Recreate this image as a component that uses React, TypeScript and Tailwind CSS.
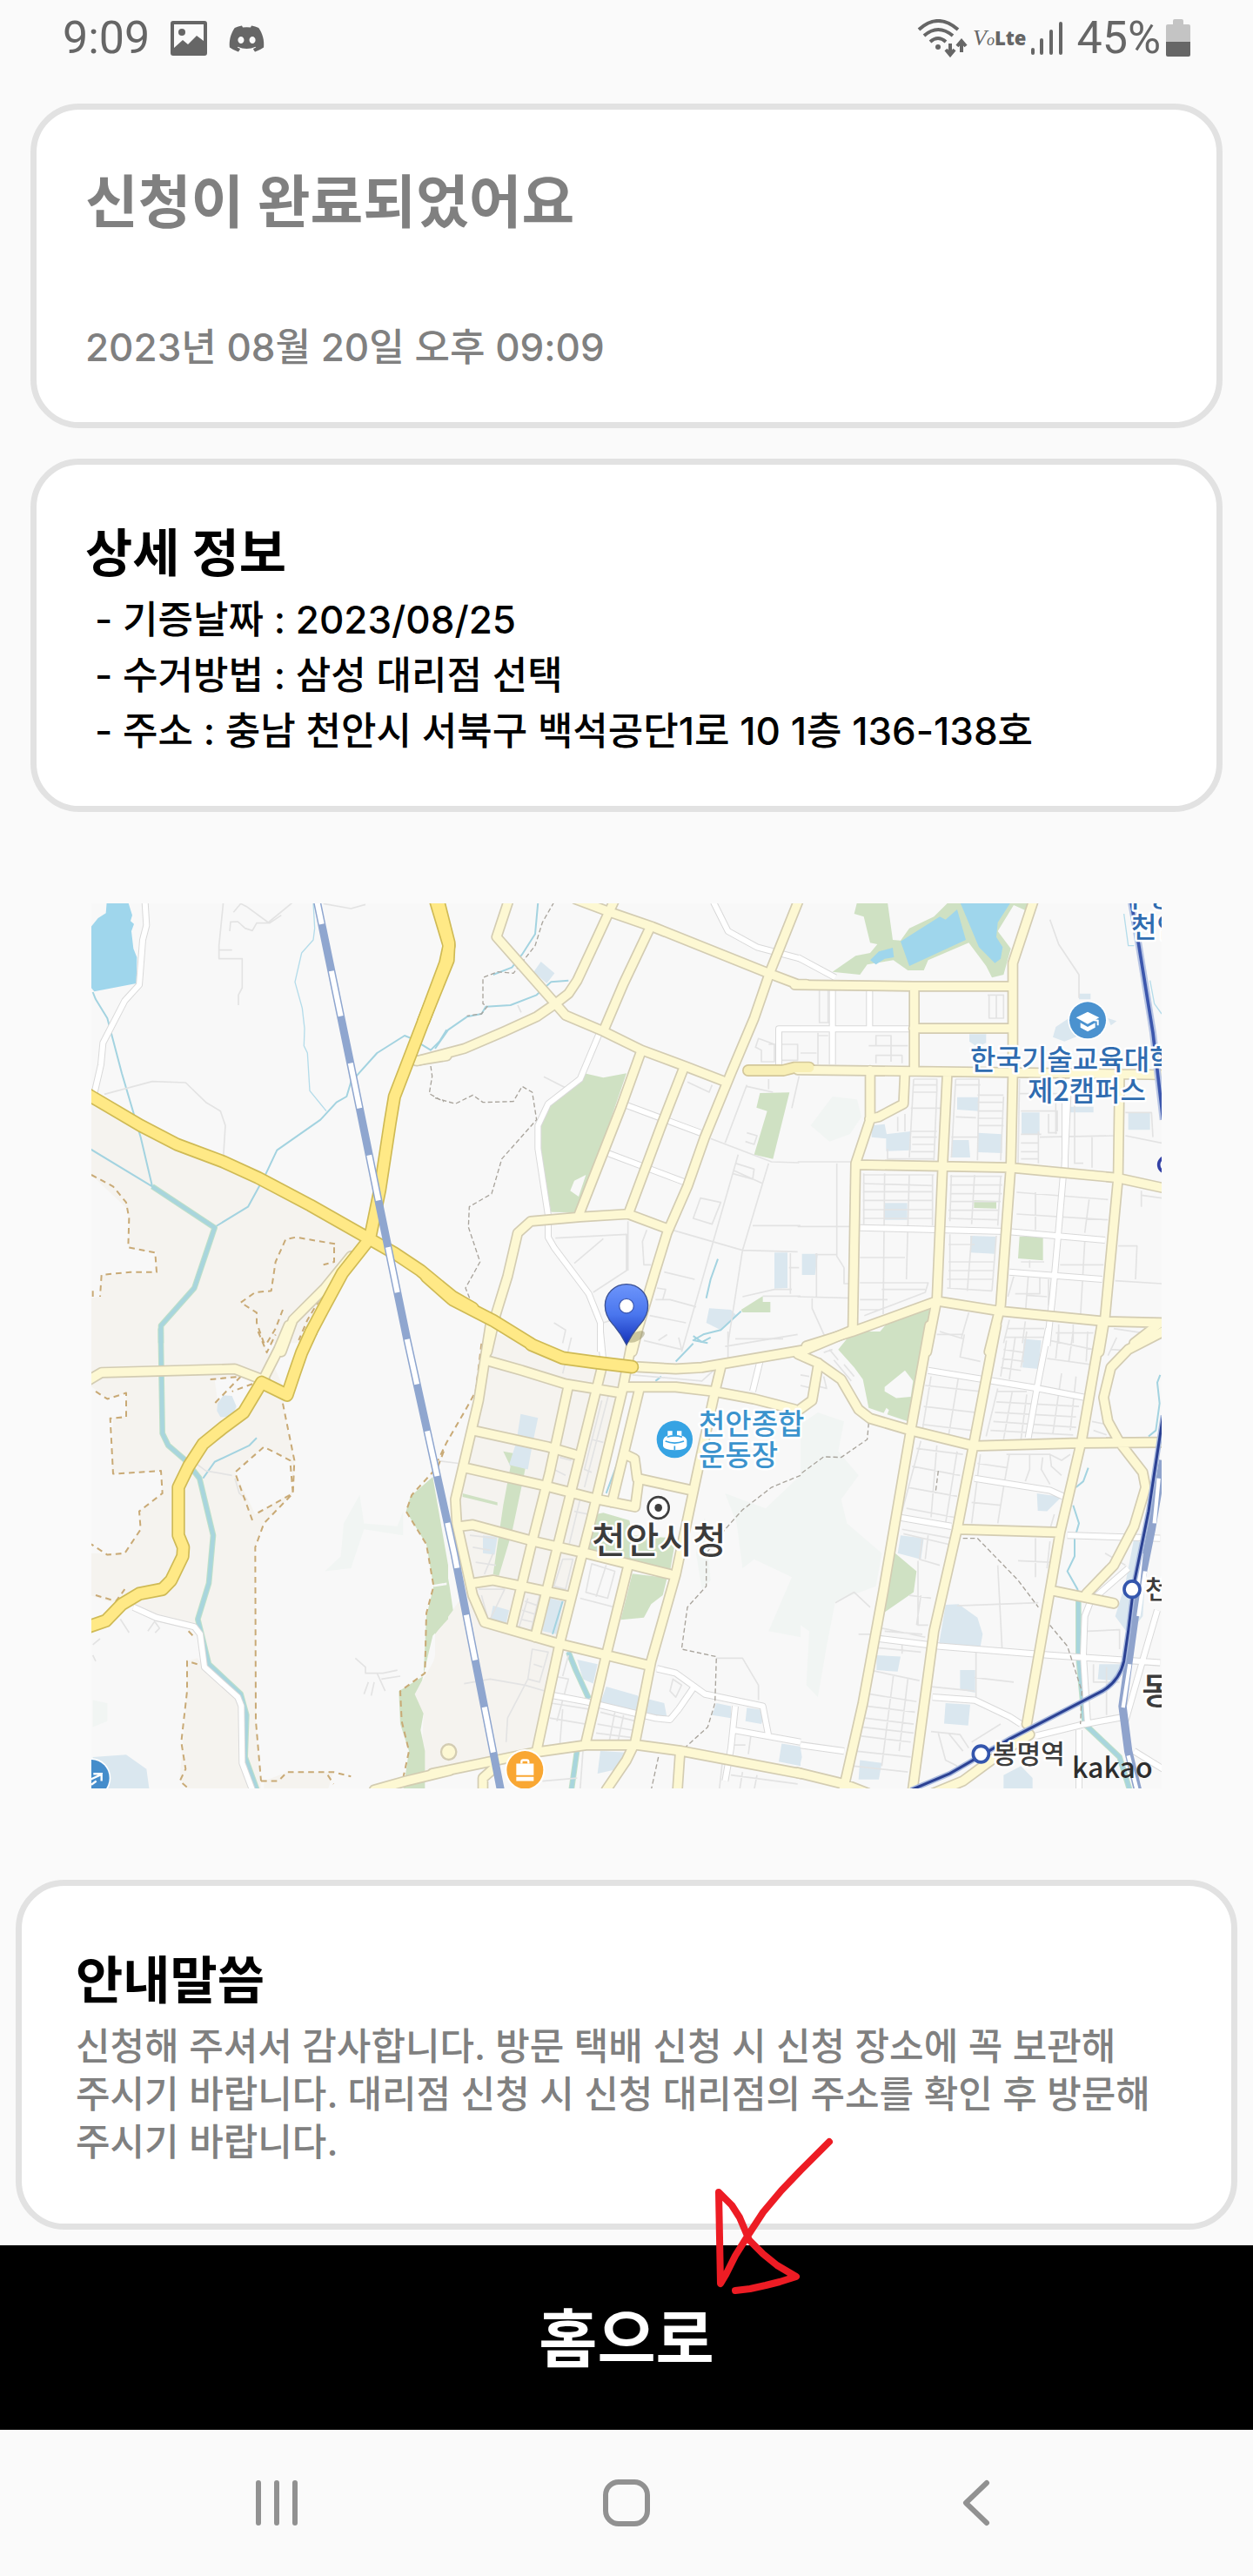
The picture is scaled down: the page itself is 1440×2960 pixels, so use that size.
import React from "react";
import { FaDiscord } from "react-icons/fa";

type Tile = "nw" | "n" | "ne" | "sw" | "s" | "se";
type Shapes = Partial<Record<Tile, string>>;

/* The map is surveyed in six sheets; each sheet has its own origin and scale. */
const SHEETS: Record<Tile, string> = {
  nw: "translate(90 1020) scale(.33333)",
  n: "translate(500 1020) scale(.33333)",
  ne: "translate(920 1020) scale(.33333)",
  sw: "translate(90 1530) scale(.33333 .34435)",
  s: "translate(500 1530) scale(.33333 .34435)",
  se: "translate(920 1530) scale(.33333 .34435)",
};

const farmland: Shapes = {
  nw: "M40 735L500 950L980 1215L850 1390L760 1570H600L650 1420L670 1340L690 1250L720 1210L880 1230L882 1280L780 1390L690 1500L560 1570H40V1415L75 1410L80 1335L265 1325L270 1258L175 1245L172 1110L45 990Z",
  sw: "M40 0H620L650 60L720 215L705 240L745 430L740 540L640 640L610 720L612 1300L630 1530H380L350 1490L375 1200V1100L410 1090L440 1130L400 985L200 920L100 900L40 880V740H160L215 660L210 600L290 540L285 465L115 475L120 290L165 280V205L100 225L40 180Z M1255 980L1225 1100L1160 1210L1190 1280L1180 1500L1270 1470V900Z M640 1500L720 1470H880L860 1530H640Z",
  s: "M190 0L440 80L680 140L640 240L520 700L420 1020L350 1390L0 1475V980L60 930L120 850L60 560L150 230Z",
};

const clearings: Shapes = {
  sw: "M540 470L640 385L730 430L745 530L610 610Z M470 160L600 150L640 180L560 260L480 230Z",
};

const haze: Shapes = {
  ne: "M35 820L110 720L195 730L210 790L170 850L100 875Z",
  sw: "M970 545L985 640L1100 650L1120 600V680L985 660L940 790L850 800L905 750L915 640Z M50 1230L100 1240V1300L50 1320Z",
  s: "M1000 540L1140 590L1260 480V1020L1150 1000L1230 820L1100 760L1060 790L1040 640Z M900 740L930 620L950 830L920 860Z",
  se: "M0 310L60 270L150 300L130 400L200 480L140 560L160 640L280 740L260 850L120 900L90 1050L60 1220L20 1180L30 1000L0 980Z",
};

const parks: Shapes = {
  n: "M515 640L580 655L660 640L495 1120L400 1118L355 880L370 800L400 745L485 680Z M1120 708L1222 706L1165 935L1100 920L1145 770L1108 758Z M1055 1455L1130 1408V1428H1156V1464H1060Z",
  ne: "M195 50H300L318 180L345 182L375 140L460 100L510 50H790L780 80L735 60L680 150L725 210L700 300L660 310L640 270L580 190L440 250L425 285H370L320 250L230 265L205 300L110 290L190 235L240 225L265 195L240 190L218 100L185 90Z M598 1078L675 1080V1106L598 1104Z M755 1202H836V1285L750 1278Z M240 1570L300 1500L455 1440L430 1570Z",
  sw: "M1222 485L1275 780V960L1222 1015L1185 1165L1160 1210L1190 1275L1180 1330L1195 1400V1530H1120L1140 1400L1110 1310L1105 1200L1190 1150L1200 950L1225 850L1200 710L1130 600L1145 550Z",
  s: "M0 580L50 850L62 930L0 1010Z M235 400L320 415L300 510L265 670L220 815L200 810L235 580L260 450Z M95 540L215 570V580L95 552Z M580 605L670 630L680 680L830 690L810 800L520 745L555 610Z M680 808L800 822L785 880L745 910L720 955L640 962Z",
  se: "M130 60L180 0H435L370 300L235 255L215 160L185 120Z M320 735L400 800L390 870L285 940Z",
};

const parkGaps: Shapes = {
  n: "M480 1010L520 990L495 1065L466 1045Z",
  se: "M290 185L360 130L388 165L380 218L330 222L290 200Z M282 280L296 255L305 262L295 285Z",
  sw: "M1225 845L1270 838V846L1225 852Z",
};

const lakes: Shapes = {
  nw: "M98 50H172L186 95L180 115L192 125L183 150L190 210L202 240L200 330L55 358L40 340V140L68 105L95 88Z",
  ne: "M550 50H725L680 120L675 170L697 205L690 245L670 260L615 205Z M345 185L480 100L500 110L540 75L570 180L440 240L375 270Z M240 250L270 220L318 207L322 240L290 245L260 265Z",
};

const facilities: Shapes = {
  n: "M365 255L412 295L385 330L340 290Z M1170 1258H1215V1380L1170 1382Z M945 1450L1020 1455L1040 1475L985 1525L935 1500Z",
  ne: "M582 505H640V535L610 550L582 530Z M960 365H1000V385H960Z M870 515L880 480L925 450L960 510L910 530Z M1060 450L1090 460L1070 475Z M540 722H615V770L540 765Z M762 775H824V852L762 848Z M925 755H1010V775H925Z M1130 775H1205V835H1130Z M245 820L290 815L300 865L245 860Z M295 850L380 840V905L295 908Z M525 870L580 870L585 930L520 930Z M612 845L695 850V915L612 912Z M288 1087H368V1145H288Z M585 1200L675 1203L670 1262L585 1258Z M5 1262H60L50 1335H5Z",
  sw: "M480 240L500 213L530 215L545 250L530 285H490L478 265Z M50 1420L165 1412L235 1460L245 1530H50Z",
  s: "M295 275L355 288L335 380L320 460L255 445L280 370Z M165 680L215 685L205 745L165 740Z M200 915L255 930L245 975L190 960Z M490 1095L560 1110L545 1175L510 1160Z M590 1185L700 1215L690 1270L570 1240Z M690 1215L790 1240L800 1290L690 1270Z M570 1400L660 1405L630 1460L560 1475Z M970 1240L1020 1250V1290L955 1280Z M1075 1255L1140 1265L1125 1310L1070 1300Z M1195 1375L1260 1385V1450L1185 1435Z M395 890L440 900L420 1010L370 1000Z",
  se: "M770 25L830 30L820 125L765 120Z M815 540L900 552L850 600L818 598Z M345 680L425 690L415 760L335 740Z M500 912L545 910L610 955L628 1010L620 1052L478 1040Z M262 1080L345 1085L335 1135L262 1130Z M550 1130H602V1205L550 1195Z M500 1240L585 1245L578 1315L495 1308Z M1030 1110H1110L1080 1165L1025 1160Z M205 1430L280 1440L270 1495H200Z M700 1480L760 1450L800 1490V1540H700Z M1150 690L1195 720L1180 950L1130 1010L1085 950L1120 840Z M0 1390L5 1420L0 1440Z",
};

const streams: Shapes = {
  nw: "M50 360L60 385L100 450L150 640L215 860L255 1030 M40 900L255 1030L470 1170L585 1100L640 1000L685 905L835 800L890 740L925 720L940 670L1030 570L1125 510L1150 520L1215 560L1245 530L1270 490 M470 1170L400 1380L285 1510V1570",
  n: "M355 50L345 160L300 230L265 275L200 300 M460 320L400 325L350 370L260 405L175 410L160 435L110 445L45 490L0 555 M975 1280L950 1350L935 1415 M1055 1460L985 1525L925 1540L890 1560L940 1570",
  sw: "M615 355L590 380L470 435L430 490",
  s: "M950 20L920 35L890 15 M890 40L830 100 M780 150L760 165 M455 1070L485 1130L530 1225 M490 1395L470 1530 M440 900L405 1010 M690 200L640 410L590 540",
  se: "M1240 145L1230 170L1238 240L1225 330L1200 350 M992 455L975 500L950 520 M940 580L960 640L945 690V750L920 800L955 860L965 950L958 1080L980 1300",
};

const thinStreams: Shapes = {
  nw: "M810 50L815 140L810 180L770 225L747 325L772 415L780 485L778 545L790 570L798 700L855 770",
  ne: "M1115 90L1130 200H1150 M1205 320L1220 400L1245 435",
};

const rivers: Shapes = {
  nw: "M255 1030L470 1172L400 1380L285 1510V1570",
  sw: "M284 -10L290 340L310 380L370 430L418 490L465 680L450 840L412 960L450 1110L560 1210L580 1280L575 1420L620 1540",
  s: "M460 1070L485 1130L530 1225 M490 1395L470 1530",
  se: "M958 880V1080L980 1310L1100 1420L1135 1530",
};

const lanes: Shapes = {
  nw: "M500 50L485 200V245H565V345L552 370V405 M485 215H530 M535 85L560 55L580 65L655 120L740 50 M522 150L525 118L550 117L575 140L600 148L615 122H660L700 95 M845 55L940 72L990 58 M90 712L255 668L370 672L440 740L490 770L507 820L500 930",
  n: "M375 652L450 690 M870 670L945 705L955 680 M285 405L297 430 M1115 520L1170 540V600H1125V560L1105 550Z M1150 540H1250V595H1180 M1150 660V695 M1230 760L1255 650 M1075 680L1000 880 M1075 685L1165 705 M950 865L1160 945L1255 948 M1035 950L1100 970L1095 1005L1025 985 M1075 845L1110 855L1100 885L1070 875 M1045 920L850 1600 M1150 950L1060 1250L1010 1570 M1030 975L1130 1020 M915 1070L985 1085L955 1160L890 1140Z M800 1175L1060 1250L1250 1255 M1095 1165H1260 M415 1208L660 1195V1320L545 1395 M580 1210L480 1295 M665 1150V1320 M730 1180L715 1220L720 1300L745 1300 M790 1325L895 1350 M765 1380L795 1385L785 1420 M760 1420L810 1420L900 1445 M740 1475L865 1500 M580 1500L610 1490 M410 1500L450 1525L440 1570 M1060 1410L1170 1385H1230 M1130 1408H1260 M1220 1310H1255 M1225 1260V1400 M1035 1555H1200",
  ne: "M-10 945H190 M125 950V1270L150 1310V1365H180 M-10 1168H180 M50 1265H125 M55 1260V1410 M-10 1410L180 1415 M40 1410V1450L85 1550 M860 110L890 195L960 300V380 M65 355V465H100 M95 355V465 M0 570H55 M60 500V610 M60 510H95 M235 545H370 M260 545V510H312V600 M260 605V578H350V605 M645 370H700V450H650V370 M675 370V450 M390 660H470V705H390M390 680H470 M390 660L375 930 M470 700L460 940 M380 760H490 M335 790V840 M360 780V840 M380 840H470M385 860H470M385 885H465M380 910H460 M300 900V935H460 M535 660H615V715 M535 680H620 M535 660L520 930 M615 700L610 940 M610 715H700M610 740H700M610 770H700M610 795H700M610 820H700 M520 860H610 M535 790L605 793 M700 720L690 940 M755 660L750 950 M755 710H900 M760 770H885V840 M820 840V950 M855 780V845H885 M760 850H830M760 880H820M760 910H820M760 935H820 M880 720V850 M825 860L1085 855 M945 750V950H975 M1005 860V965 M1120 775H1210L1215 860 M1120 855L1245 880 M218 985V1160 M290 985L285 1470 M375 990L365 1350 M455 990V1165 M215 990H460M215 1020L455 1027M215 1048H455M215 1078H455M215 1110H455M215 1140H455 M520 990L515 1150 M600 990L590 1160 M690 995L680 1165 M515 995H695M515 1025H695M515 1055H695M515 1082H690M510 1112L685 1112M510 1140L680 1145 M205 1275H360 M205 1362H440L430 1395L220 1475 M280 1385H430 M205 1420H300 M205 1455H270 M515 1195V1380 M590 1200L575 1390 M675 1200L660 1390 M510 1230H600M510 1290H665M510 1320H665M505 1350H665M505 1380L660 1390 M745 1050L1060 1075 M810 1050V1180 M995 1075L980 1190 M745 1125L1060 1145 M760 1290H840 M790 1285V1310 M895 1300H1045 M980 1220L965 1480 M735 1340L715 1410 M785 1340L775 1470 M825 1345V1400H740 M855 1350V1440 M780 1405L850 1410 M1095 1235H1160L1155 1350 M1085 1355L1245 1365 M1175 1045V1100 M1175 1060L1245 1070 M580 1465L555 1550 M480 1530L560 1555 M720 1490L700 1570 M775 1495L765 1570 M710 1520H840M705 1550H840 M890 1505V1570M940 1505V1570M880 1535H1010 M1080 1520L1180 1535L1150 1570",
  sw: "M145 960L175 1005 M265 965L240 1000 M265 970L280 990L265 1005 M405 440L440 465L530 480 M540 490L555 540L580 560 M955 1090L990 1120V1140H1050L1100 1130 M1030 1140L1058 1200 M1045 1160L1110 1150 M1000 1170L985 1210 M1020 1170L1010 1215 M50 1080L60 1100 M75 1025L50 1045",
  s: "M0 430L80 440 M470 20L440 140 M720 30L850 60L840 20 M1000 50L1250 10 M770 30L800 10 M1010 0V100 M960 130L920 165L680 145 M600 205L515 520 M575 230L515 460L540 470 M540 360L580 370 M430 420L470 430 M410 460L450 480 M480 600L530 610 M460 720L500 560 M120 680L210 690 M130 720L190 730 M140 770L210 780 M170 810L200 740 M150 860L240 860L190 960 M160 880L180 950 M320 890L290 985M360 880L330 1000 M300 930L350 945M310 900L355 915 M295 960L340 970 M440 760L410 850L450 860L475 760Z M540 775L620 800L595 890L520 870Z M590 780L555 885 M500 890L620 920 M335 1060L390 1070L360 1170L320 1160Z M340 1110L370 1120 M100 1175L190 1160L310 1180L380 1200 M320 1160L250 1290L245 1370 M410 1150L460 1160L420 1300 M460 1080L440 1150 M400 1240L530 1260M395 1290L520 1310 M440 1260L430 1380 M570 1270L690 1300M560 1310L680 1330M555 1340L680 1355 M620 1270L600 1370M650 1280L630 1370 M820 1160L850 1180L830 1220L810 1200Z M970 1090H1060L1115 1180V1230 M1090 1340L1080 1410 M1030 1380H1070 M1020 1480L1250 1510 M1060 1470L1050 1530M1110 1480L1100 1530 M370 1500L490 1490 M510 1400L500 1530 M990 1440L980 1530",
  se: "M100 60L130 95M115 95L175 165M150 110L185 150 M80 70L110 60 M0 180L40 190 M0 145L30 150 M80 150L90 190L50 180 M565 10L550 85L620 100 M560 10H470 M545 150L510 350 M450 150L420 330 M430 180L620 200M425 250L600 270M420 310L590 330 M710 30L690 150M740 20L720 160M780 0L760 120 M700 60L770 70M695 90L770 100M690 120L760 130 M860 30L1010 60 M850 90L1000 110 M900 140L870 340M950 150L930 330 M680 190L640 350M730 200L700 360M780 210L760 360 M680 200H780M675 235L960 250M670 270L950 285M665 300L950 320M655 330L940 345 M890 0L880 90M940 0L925 100M990 0L985 100 M1090 20L1060 80M1070 60L1150 65 M1005 300L1055 310M1010 330L1055 345 M415 365L350 600M470 380L450 620M540 400L500 640 M400 390L560 410M385 450L550 480M370 520L540 550M365 590L530 620 M350 660L520 690M355 675L510 710M420 690L410 760L480 780 M440 680L430 760 M620 410L590 640M720 410L700 520L680 640 M610 440L715 455M590 570L690 580 M710 410L860 410L865 450L900 480 M790 410V460L775 500 M835 420L830 460L860 510 M860 410L900 430L930 410 M810 690V820M750 765L860 770 M680 780L695 1060 M540 915L820 905 M405 765V980H440 M375 880L450 890M415 880L400 980 M280 990L430 1020M290 1000L420 1010 M265 1055L415 1070M350 1030V1075 M200 1010H250 M120 905L185 870L240 920 M605 1070V1230 M600 1155L735 1170 M450 1185L600 1200M240 1130L410 1165 M320 1150L280 1450 M370 1160L340 1400 M240 1210L400 1235M225 1250L395 1270M220 1290L390 1310M215 1320L390 1340M210 1350L380 1370M190 1400L380 1420 M185 1450L370 1470 M475 1340L500 1430L540 1450 M510 1340L560 1400 M690 1310L590 1370 M450 1335L550 1345L580 1390 M990 1000L1100 995V1060 M1055 1120V1280 M1010 1110V1170H1100 M875 610L860 660 M1050 740L1120 780 M860 700L850 790",
};

const whiteRoads: Shapes = {
  nw: "M230 50L235 130L222 180L210 335L160 390L85 535L78 610L55 710",
  n: "M565 505L500 660L390 745L355 820V900L390 1130V1205L410 1240L530 1400L570 1500V1600 M960 50L1010 150L1110 205L1260 245 M660 750L915 845 M595 915L860 1015 M1260 487H1185V620",
  ne: "M-10 240L120 310 M0 487H375 M110 355V610 M238 355V480 M205 1172L710 1185L1050 1215 M905 1000L888 1200L870 1400L850 1580 M925 650L910 970 M720 1325L1040 1350 M912 740V970",
  sw: "M190 920L270 955L400 985L420 1010L435 1120L550 1220L562 1250L565 1440L600 1530",
  s: "M570 0L580 100 M1120 100L1095 200 M410 1215L520 1235L760 1290L810 1295L840 1260L890 1190 M765 1125L830 1140L930 1210L1130 1250L1150 1350 M1035 1250L1020 1390L1000 1500 M1030 1330L1260 1370",
  se: "M855 -10L815 190L785 355 M440 130L820 190L980 220 M600 490L860 530L905 550 M340 620L520 650 M920 680L1240 690 M270 1025L480 1050L860 1080L1240 1105 M455 1220L600 1230L720 1285L760 1310 M0 1380L150 1400 M1130 790L1000 900L980 950L975 1080L990 1310 M810 1350L980 1310L1120 1285 M960 1330V1530 M1230 930L1170 1130L1120 1300 M1150 1400L1250 1460",
};

const lightRoads: Shapes = {
  nw: "M700 1600L740 1490L850 1380L940 1270 M1165 597L1270 580",
  n: "M255 40L212 170L415 400L450 440L580 495L712 560L860 615L990 665 M485 40L605 85L750 135L1150 295L1250 333H1280 M620 40L560 170L490 320L460 365L415 400L350 445L240 495L100 555L-60 597 M740 140L650 330L582 490 M1255 40L1155 290L1100 450L1020 640L930 860L870 1030L800 1190L760 1320L700 1520L680 1600 M712 560L640 760L495 1130 M860 615L780 820L670 1115 M180 1600L210 1470L250 1340L285 1190L330 1150L500 1135L665 1125L800 1175",
  ne: "M-20 335L390 340L732 340 M805 40L732 260V640L725 960L690 1440L650 1600 M392 340V630 M390 485H730 M-10 628L730 637L1250 645 M240 630V800L190 950L180 1530 M360 635L355 745L270 790L238 797 M506 640L490 960L470 1420L435 1600 M190 955L720 965L1090 1000L1250 1035 M1100 640L1095 1000L1050 1480L1030 1600 M20 1580L180 1530L470 1425L690 1460L1050 1495L1250 1500 M1240 1500L1150 1570",
  sw: "M40 160L80 137L540 125L620 155L645 165 M640 155L690 60L725 -20 M1020 1530L1130 1500L1280 1465",
  s: "M-10 1475L340 1405L520 1380L700 1380L850 1400L1260 1475 M190 -20L150 230L70 560L75 640L130 880L170 970L420 1040L740 1115 M190 100L300 130L450 175L640 205 M130 330L390 385L480 410 M105 455L380 515L560 560L690 585L703 490 M90 650L130 645L340 700L520 740L810 810 M130 840L200 830L300 850L470 885 M460 180L395 470L335 700L265 980 M575 120L470 530L345 1020 M690 -20L645 200L540 620L430 1040L350 1400 M705 190L610 570 M660 412L688 425L697 490L885 530 M700 118L830 125L920 120L1280 60 M650 185L830 185L960 200L1100 225L1240 260 M985 120L965 200L900 490L830 810L745 1100L690 1370L660 1430L590 1530 M665 785L590 1080L520 1370 M845 1400L835 1540 M165 1540V1490L200 1460",
  se: "M445 -20L380 330L285 870L215 1240L145 1540 M675 -20L600 360L540 660L460 1000L385 1540 M1038 -20L970 360L895 670L780 1310 M-10 75L60 105L140 160L200 260L240 290L380 330L600 382L960 372L1240 370 M-10 72L180 -5 M62 105L40 230L0 258 M545 660L890 670 M870 865L1080 907 M985 875L1080 780L1150 650L1190 520L1180 470L1100 370L1060 300L1045 220L1070 120L1130 60L1250 0 M-10 1472L150 1510L230 1540 M460 1540L560 1500L700 1400L790 1345",
};

const amberRoads: Shapes = {
  n: "M1080 630H1200L1240 620H1290",
};

const majorRoads: Shapes = {
  nw: "M20 705L45 720L215 820L340 885L500 945L620 1000L800 1095L985 1200L1090 1260L1180 1320L1290 1410L1360 1450 M1230 40L1278 200L1265 260L1190 460L1090 720L1075 810L1040 1040L1005 1210L910 1330L840 1460L803 1530",
  n: "M10 40L48 190L45 250L-40 460 M-30 1340L60 1420L200 1492L330 1572",
  sw: "M803 0L770 70L745 140L720 212L632 170L570 270L500 320L430 375L380 450L345 520V680L362 720L360 750L320 830L290 860L210 875L150 910L95 965L20 990",
  s: "M330 43L440 88L550 103L680 118",
};

const brownTrails: Shapes = {
  nw: "M45 990L120 1030L165 1085L175 1140L172 1240L265 1258L270 1325L180 1325L80 1335L75 1410 M50 1410V1385 M882 1240V1290L845 1300 M885 1228L750 1205L715 1212L680 1290L665 1390L610 1395L560 1430L615 1465V1500L640 1570 M705 1455L680 1520L650 1570 M850 1390L790 1490L760 1560",
  sw: "M620 0L650 70L680 10 M455 160L560 150L470 240 M600 175L530 200 M60 200L100 225L165 205V285L110 290L120 475L285 465L290 540L210 600L215 660L160 740L100 745L45 710 M60 880L130 900L160 860 M705 240L745 430L740 540L640 640L610 720L612 1300L630 1500 M600 630L540 470L640 385L730 430L740 540L610 610 M380 1000L400 1020 M410 1110L375 1100L375 1200L355 1370L370 1460L350 1500L380 1525 M630 1500L690 1500L720 1470H880L940 1485 M860 1480L880 1510 M1260 400L1240 450L1150 545L1130 600L1200 710L1225 850L1200 940L1195 1140L1110 1200L1115 1300L1140 1400L1120 1490",
  s: "M160 40L140 200L100 270L40 370L10 430",
};

const greyTrails: Shapes = {
  nw: "M1215 615L1220 650L1210 710L1260 738",
  n: "M410 50L370 120L345 200L270 295L215 290L165 310V400L180 410L160 435L110 442 M0 725L70 745L130 715L165 740L270 737L300 685L335 705L350 800L230 935L195 1055L118 1100L115 1170L155 1290L105 1380L125 1430",
  s: "M1260 480L1160 520L1060 595L1000 660L935 740V850L870 920L850 1060L970 1085L965 1240L940 1320L860 1390 M770 1420L745 1530",
  se: "M235 305L230 360L140 420L80 418L0 475 M475 465L465 540 M560 690L610 690L680 760L750 830L820 920 M860 980L920 1050L970 1200L965 1310",
};

function Layer({ shapes, ...style }: { shapes: Shapes } & React.SVGProps<SVGPathElement>) {
  return (
    <>
      {(Object.keys(shapes) as Tile[]).map((tile) => (
        <path key={tile} transform={SHEETS[tile]} d={shapes[tile]} {...style} />
      ))}
    </>
  );
}

function Line({
  shapes,
  color,
  width,
  dash,
  cap = "butt",
}: {
  shapes: Shapes;
  color: string;
  width: number;
  dash?: string;
  cap?: "butt" | "round";
}) {
  return (
    <Layer
      shapes={shapes}
      fill="none"
      stroke={color}
      strokeWidth={width}
      strokeDasharray={dash}
      strokeLinecap={cap}
      strokeLinejoin="round"
    />
  );
}

function StoreMap() {
  return (
    <svg
      viewBox="105 1038 1230 1017"
      className="block w-full font-['Noto_Sans_CJK_KR',sans-serif]"
      role="img"
      aria-label="천안시청 주변 지도"
    >
      <defs>
        <linearGradient id="pin" x1="0" y1="0" x2="0" y2="1">
          <stop offset="0" stopColor="#6d95fb" />
          <stop offset=".5" stopColor="#4a76ee" />
          <stop offset="1" stopColor="#1330b8" />
        </linearGradient>
      </defs>
      <rect x="105" y="1038" width="1230" height="1017" fill="#f8f8f8" />
      <Layer shapes={farmland} fill="#f5f3ef" />
      <Layer shapes={clearings} fill="#f8f8f8" />
      <Layer shapes={haze} fill="#f1f5f3" />
      <Layer shapes={parks} fill="#cfe1c3" />
      <Layer shapes={parkGaps} fill="#f8f8f8" />
      <Layer shapes={lakes} fill="#9fd6ec" />
      <Layer shapes={facilities} fill="#dae7ef" />
      <Line shapes={thinStreams} color="#b4dcea" width={4} />
      <Line shapes={streams} color="#a3d3e0" width={6} />
      <Line shapes={rivers} color="#bfe0c8" width={20} />
      <Line shapes={rivers} color="#a8d5dd" width={14} />
      <Line shapes={lanes} color="#e3e3e3" width={5} />
      <Line shapes={whiteRoads} color="#d9d9d9" width={24} />
      <Line shapes={whiteRoads} color="#ffffff" width={18} />
      <Line shapes={brownTrails} color="#c9aa76" width={6} dash="20 15" />
      <Line shapes={greyTrails} color="#a9a49c" width={4} dash="16 9" />

      <Line shapes={lightRoads} color="#d3ccb2" width={38} cap="round" />
      <Line shapes={amberRoads} color="#d3c79b" width={42} cap="round" />
      <g transform={SHEETS.s}>
        <circle cx="47" cy="1403" r="26" fill="#fdf8d3" stroke="#d3ccb2" strokeWidth="7" />
      </g>
      <Line shapes={lightRoads} color="#fdf8d3" width={28} cap="round" />
      <Line shapes={amberRoads} color="#f8efb6" width={32} cap="round" />
      <Line shapes={majorRoads} color="#cfba55" width={46} cap="round" />
      <Line shapes={majorRoads} color="#ffe986" width={36} cap="round" />

      {/* high-speed railway across the west side */}
      <path d="M359 1010L403 1223L435 1380L468 1540L522 1785L576 2060" fill="none" stroke="#8fa6cf" strokeWidth="9" />
      <path
        d="M359 1010L403 1223L435 1380L468 1540L522 1785L576 2060"
        fill="none"
        stroke="#fff"
        strokeWidth="6"
        strokeDasharray="53 55"
      />

      {/* metropolitan line on the east side */}
      <g transform={SHEETS.ne} fill="none">
        <path d="M1140 50L1165 190L1215 500L1250 800" stroke="#b9c6e4" strokeWidth="24" />
        <path d="M1140 50L1165 190L1215 500L1250 800" stroke="#3c57ad" strokeWidth="11" />
      </g>
      <g transform={SHEETS.se} fill="none">
        <path d="M1250 430L1210 660L1160 900L1110 1250L1130 1400L1165 1540" stroke="#8fa3cc" strokeWidth="28" />
        <path
          d="M1235 490L1220 640 M1175 740L1160 880 M1188 800L1165 950 M1135 1110L1112 1255 M1130 1415L1160 1530"
          stroke="#fff"
          strokeWidth="13"
        />
        <path
          d="M1250 280L1200 600L1150 840L1130 1000L1115 1100Q1100 1165 1040 1200L720 1360L515 1475L380 1530"
          stroke="#a9bade"
          strokeWidth="18"
        />
        <path
          d="M1250 280L1200 600L1150 840L1130 1000L1115 1100Q1100 1165 1040 1200L720 1360L515 1475L380 1530"
          stroke="#2b4193"
          strokeWidth="9"
        />
        <circle cx="1143" cy="860" r="27" fill="#fff" stroke="#3456ad" strokeWidth="11" />
        <circle cx="622" cy="1410" r="27" fill="#fff" stroke="#3456ad" strokeWidth="11" />
      </g>
      <g transform={SHEETS.ne}>
        <circle cx="1262" cy="955" r="27" fill="#fff" stroke="#3341a5" strokeWidth="11" />
        <circle cx="990" cy="457" r="68" fill="#fff" />
        <circle cx="990" cy="457" r="63" fill="#4b92cf" />
        <path d="M990 428L1030 448L990 470L950 448Z M965 466L990 480L1016 466V482L990 496L965 482Z" fill="#fff" />
        <path d="M1000 455L1025 458V475" stroke="#fff" strokeWidth="6" fill="none" />
      </g>
      <g transform={SHEETS.sw}>
        <circle cx="46" cy="1490" r="66" fill="#fff" />
        <circle cx="46" cy="1490" r="61" fill="#458dcb" />
        <path d="M30 1500L80 1478V1500M52 1476L82 1476M45 1512L62 1500" stroke="#fff" strokeWidth="7" fill="none" />
      </g>
      <g transform={SHEETS.s}>
        <circle cx="826" cy="360" r="62" fill="#36a3e3" />
        <path
          d="M802 332H818V348H834V332H850V348Q866 352 868 364V382Q864 396 828 396Q790 396 786 382V364Q788 352 802 348Z"
          fill="#fff"
        />
        <path d="M794 366Q826 378 858 366M826 396V382M800 352Q826 344 852 352" stroke="#36a3e3" strokeWidth="5" fill="none" />
        <circle cx="770" cy="588" r="42" fill="#fff" />
        <circle cx="770" cy="588" r="36" fill="#fff" stroke="#3f3f3f" strokeWidth="8" />
        <circle cx="770" cy="588" r="13" fill="#3f3f3f" />
        <circle cx="310" cy="1463" r="69" fill="#fff" />
        <circle cx="310" cy="1463" r="63" fill="#f9a733" />
        <path d="M298 1442V1436Q298 1430 304 1430H316Q322 1430 322 1436V1442" stroke="#fff" strokeWidth="7" fill="none" />
        <path d="M280 1442H340V1480H280ZM280 1486H340V1500H280Z" fill="#fff" />
      </g>

      <g stroke="#fff" strokeWidth="5" paintOrder="stroke" strokeLinejoin="round" fontWeight="500">
        <g fill="#2f6cb0" fontSize="32">
          <text x="1290" y="1042">두정</text>
          <text x="1300" y="1077">천안</text>
          <text x="1115" y="1229">한국기술교육대학교</text>
          <text x="1181" y="1265">제2캠퍼스</text>
        </g>
        <g fill="#3b93cd" fontSize="33">
          <text x="803" y="1648">천안종합</text>
          <text x="803" y="1684">운동장</text>
        </g>
        <g fill="#3c3c3c">
          <text x="680" y="1785" fontSize="42">천안시청</text>
          <text x="1141" y="2026" fontSize="30">봉명역</text>
          <text x="1316" y="1837" fontSize="30">천안</text>
          <text x="1312" y="1958" fontSize="42">동남구</text>
        </g>
      </g>
      <text x="1232" y="2043" fontSize="32" fontWeight="500" fill="#2d2d2d">
        kakao
      </text>

      <ellipse cx="731" cy="1536" rx="11" ry="5" fill="#8d8a5c" opacity=".45" transform="rotate(-28 731 1536)" />
      <g transform={SHEETS.n}>
        <path
          d="M660 1576Q640 1535 612 1504Q586 1475 586 1440A74 73 0 0 1 734 1440Q734 1475 708 1504Q680 1535 660 1576Z"
          fill="url(#pin)"
          stroke="#3a5093"
          strokeWidth="4"
        />
        <circle cx="660" cy="1442" r="25" fill="#fff" stroke="#3f5cb5" strokeWidth="4" />
      </g>
    </svg>
  );
}

function StatusBar() {
  return (
    <header className="flex h-[88px] items-center justify-between px-[72px] text-[#666666]">
      <div className="flex items-center">
        <span className="font-['Roboto',sans-serif] text-[52px] leading-[60px]">9:09</span>
        <svg viewBox="0 0 42 40" className="ml-[24px] h-[40px] w-[42px]" role="img" aria-label="사진">
          <path
            fill="currentColor"
            fillRule="evenodd"
            d="M3 0H39Q42 0 42 3V37Q42 40 39 40H3Q0 40 0 37V3Q0 0 3 0ZM4 4V31L14 22L20 27L30 17L38 23V4Z"
          />
          <circle cx="13" cy="13" r="4" fill="currentColor" />
        </svg>
        <FaDiscord className="ml-[24px] size-[43px]" aria-label="Discord" />
      </div>
      <div className="flex items-center">
        <svg viewBox="0 0 58 44" className="h-[44px] w-[58px]" fill="none" stroke="currentColor" role="img" aria-label="Wi-Fi">
          <g strokeWidth="4">
            <path d="M2 12Q24 -8 47 12" />
            <path d="M8 19Q24 5 41 19" />
            <path d="M15 26Q24 18 33 26" />
          </g>
          <circle cx="24" cy="32" r="3" fill="currentColor" stroke="none" />
          <path strokeWidth="4" d="M38 28V40M33 35L38 41L43 35M51 38V26M46 31L51 25L56 31" />
        </svg>
        <span className="ml-[6px] flex items-baseline">
          <span className="font-['Liberation_Serif',serif] text-[26px] leading-[30px] italic">V</span>
          <span className="font-['Liberation_Serif',serif] text-[18px] leading-[30px] italic">o</span>
          <span className="font-['Open_Sans',sans-serif] text-[22px] leading-[30px] font-extrabold">Lte</span>
        </span>
        <svg viewBox="0 0 36 40" className="ml-[6px] h-[40px] w-[36px]" stroke="currentColor" strokeWidth="4" strokeLinecap="round" role="img" aria-label="신호 세기">
          <path d="M2 33V37M12 22V37M23 12V37M34 3V37" />
        </svg>
        <span className="ml-[16px] font-['Roboto',sans-serif] text-[52px] leading-[60px]">45%</span>
        <svg viewBox="0 0 28 44" className="ml-[6px] h-[44px] w-[28px]" role="img" aria-label="배터리">
          <path fill="#c4c4c4" d="M8 2Q8 0 10 0H18Q20 0 20 2V6H26Q28 6 28 8V28H0V8Q0 6 2 6H8Z" />
          <path fill="currentColor" d="M0 26H28V41Q28 43 26 43H2Q0 43 0 41Z" />
        </svg>
      </div>
    </header>
  );
}

const details = [
  ["기증날짜", "2023/08/25"],
  ["수거방법", "삼성 대리점 선택"],
  ["주소", "충남 천안시 서북구 백석공단1로 10 1층 136-138호"],
];

export default function App() {
  return (
    <div className="flex min-h-screen flex-col bg-[#fafafa] font-['Inter','Noto_Sans_CJK_KR',sans-serif]">
      <StatusBar />
      <main className="flex flex-col">
        <section className="mx-[35px] mt-[31px] rounded-[56px] border-[7px] border-[#e2e2e2] bg-white px-[56px] pt-[66px] pb-[54px] text-[#808080]">
          <h1 className="text-[66px] leading-[80px] font-bold">신청이 완료되었어요</h1>
          <p className="mt-[95px] text-[44px] leading-[64px] font-medium">2023년 08월 20일 오후 09:09</p>
        </section>

        <section className="mx-[35px] mt-[35px] rounded-[56px] border-[7px] border-[#e2e2e2] bg-white px-[56px] pt-[64px] pb-[54px] text-black">
          <h2 className="text-[59px] leading-[76px] font-bold">상세 정보</h2>
          <ul className="mt-[6px] pl-[11px] text-[44px] leading-[64px] font-medium">
            {details.map(([label, value]) => (
              <li key={label}>
                - {label} : {value}
              </li>
            ))}
          </ul>
        </section>

        <div className="mx-[105px] mt-[105px]">
          <StoreMap />
        </div>

        <section className="mx-[18px] mt-[105px] rounded-[56px] border-[7px] border-[#e2e2e2] bg-white px-[62px] pt-[71px] pb-[66px]">
          <h2 className="text-[59px] leading-[76px] font-bold text-black">안내말씀</h2>
          <p className="mt-[10px] text-[43px] leading-[55px] font-medium break-keep text-[#808080]">
            신청해 주셔서 감사합니다. 방문 택배 신청 시 신청 장소에 꼭 보관해 주시기 바랍니다. 대리점 신청 시 신청 대리점의
            주소를 확인 후 방문해 주시기 바랍니다.
          </p>
        </section>
      </main>

      <div className="relative mt-[18px]">
        <button type="button" className="flex h-[212px] w-full items-center justify-center bg-black pt-[4px] text-[73px] leading-[100px] font-bold text-white">
          홈으로
        </button>
        {/* hand-drawn arrow pointing at the button */}
        <svg
          viewBox="815 2450 150 190"
          className="pointer-events-none absolute -top-[130px] left-1/2 ml-[95px] h-[190px] w-[150px]"
          fill="none"
          stroke="#ed1c24"
          strokeWidth="8"
          strokeLinecap="round"
          strokeLinejoin="round"
          aria-hidden="true"
        >
          <path d="M953 2461L939 2475L920 2494L898 2517L877 2542L860 2568L845 2592L834 2614L828 2624L826 2519L841 2534L850 2548L861 2574L877 2590L893 2603L915 2616L896 2622L880 2626L862 2630L845 2632" />
        </svg>
      </div>

      <nav className="flex h-[168px] items-center px-[117px] text-[#919191]" aria-label="시스템 탐색">
        <button type="button" aria-label="최근 앱" className="flex flex-1 justify-center">
          <svg viewBox="0 0 50 54" className="h-[54px] w-[50px]" stroke="currentColor" strokeWidth="6" strokeLinecap="round">
            <path d="M4 4V50M25 4V50M46 4V50" />
          </svg>
        </button>
        <button type="button" aria-label="홈" className="flex flex-1 justify-center">
          <svg viewBox="0 0 56 56" className="size-[56px]" fill="none" stroke="currentColor" strokeWidth="6">
            <rect x="4" y="4" width="48" height="48" rx="15" />
          </svg>
        </button>
        <button type="button" aria-label="뒤로" className="flex flex-1 justify-center">
          <svg viewBox="0 0 32 54" className="h-[54px] w-[32px]" fill="none" stroke="currentColor" strokeWidth="6" strokeLinecap="round" strokeLinejoin="round">
            <path d="M28 4L4 27L28 50" />
          </svg>
        </button>
      </nav>
    </div>
  );
}
